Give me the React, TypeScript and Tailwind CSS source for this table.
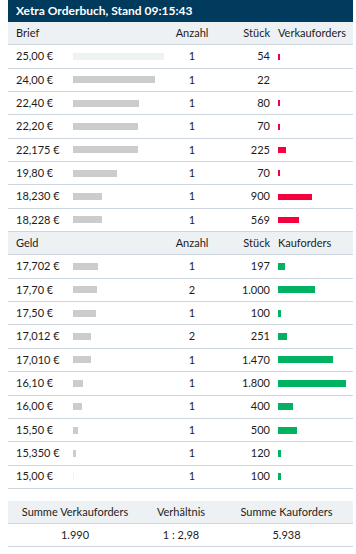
import React from "react";

type Row = { price: string; bar: number; light?: boolean; anzahl: string; stueck: string; ob: number };

const brief: Row[] = [
  { price: "25,00 €", bar: 91, light: true, anzahl: "1", stueck: "54", ob: 2 },
  { price: "24,00 €", bar: 82, anzahl: "1", stueck: "22", ob: 0 },
  { price: "22,40 €", bar: 66, anzahl: "1", stueck: "80", ob: 2 },
  { price: "22,20 €", bar: 65, anzahl: "1", stueck: "70", ob: 2 },
  { price: "22,175 €", bar: 65, anzahl: "1", stueck: "225", ob: 8 },
  { price: "19,80 €", bar: 44, anzahl: "1", stueck: "70", ob: 2 },
  { price: "18,230 €", bar: 29, anzahl: "1", stueck: "900", ob: 34 },
  { price: "18,228 €", bar: 29, anzahl: "1", stueck: "569", ob: 21 },
];

const geld: Row[] = [
  { price: "17,702 €", bar: 25, anzahl: "1", stueck: "197", ob: 7 },
  { price: "17,70 €", bar: 24, anzahl: "2", stueck: "1.000", ob: 37 },
  { price: "17,50 €", bar: 23, anzahl: "1", stueck: "100", ob: 3 },
  { price: "17,012 €", bar: 18, anzahl: "2", stueck: "251", ob: 9 },
  { price: "17,010 €", bar: 18, anzahl: "1", stueck: "1.470", ob: 55 },
  { price: "16,10 €", bar: 10, anzahl: "1", stueck: "1.800", ob: 68 },
  { price: "16,00 €", bar: 9, anzahl: "1", stueck: "400", ob: 15 },
  { price: "15,50 €", bar: 5, anzahl: "1", stueck: "500", ob: 19 },
  { price: "15,350 €", bar: 3, anzahl: "1", stueck: "120", ob: 3 },
  { price: "15,00 €", bar: 1, light: true, anzahl: "1", stueck: "100", ob: 3 },
];

function HeadRow({ label, orders }: { label: string; orders: string }) {
  return (
    <div className="flex h-[23.35px] items-center border-b border-[#cdd6de] bg-[#eef1f4] pl-2">
      <div className="w-[149px]">{label}</div>
      <div className="w-[54px] text-center">Anzahl</div>
      <div className="w-[51px] text-right">Stück</div>
      <div className="flex-1 pl-2">{orders}</div>
    </div>
  );
}

function DataRow({ r, color, h }: { r: Row; color: string; h: string }) {
  return (
    <div className="flex h-[23.35px] items-center border-b border-[#cdd6de] pl-2">
      <div className="w-[57px]">{r.price}</div>
      <div className="w-[92px]">
        <div
          className={r.light ? "h-[7px] bg-[#eef2f0]" : "h-[7px] bg-[#cccccc]"}
          style={{ width: r.bar }}
        />
      </div>
      <div className="w-[54px] text-center">{r.anzahl}</div>
      <div className="w-[51px] text-right">{r.stueck}</div>
      <div className="flex-1 pl-2">
        {r.ob > 0 && <div className={`${h} ${color}`} style={{ width: r.ob }} />}
      </div>
    </div>
  );
}

export default function App() {
  return (
    <div className="w-[356px] bg-white pl-2 pr-[3px] text-[11px] text-[#1c1c1c]" style={{ fontFamily: "Lato, 'Liberation Sans', sans-serif" }}>
      <div className="flex h-[22px] items-center bg-[#003a5c] pl-2 text-[12px] font-bold text-white">
        Xetra Orderbuch, Stand 09:15:43
      </div>
      <HeadRow label="Brief" orders="Verkauforders" />
      {brief.map((r) => (
        <DataRow key={r.price} r={r} color="bg-[#f5003d]" h="h-[6px]" />
      ))}
      <HeadRow label="Geld" orders="Kauforders" />
      {geld.map((r) => (
        <DataRow key={r.price} r={r} color="bg-[#00b261]" h="h-[7px]" />
      ))}
      <div className="mt-3">
        <div className="grid h-[23px] grid-cols-[134px_78px_1fr] items-center border-b border-[#cdd6de] bg-[#eef1f4] text-center">
          <div>Summe Verkauforders</div>
          <div>Verhältnis</div>
          <div>Summe Kauforders</div>
        </div>
        <div className="grid h-[23px] grid-cols-[134px_78px_1fr] items-center border-b border-[#cdd6de] text-center">
          <div>1.990</div>
          <div>1 : 2,98</div>
          <div>5.938</div>
        </div>
      </div>
    </div>
  );
}
